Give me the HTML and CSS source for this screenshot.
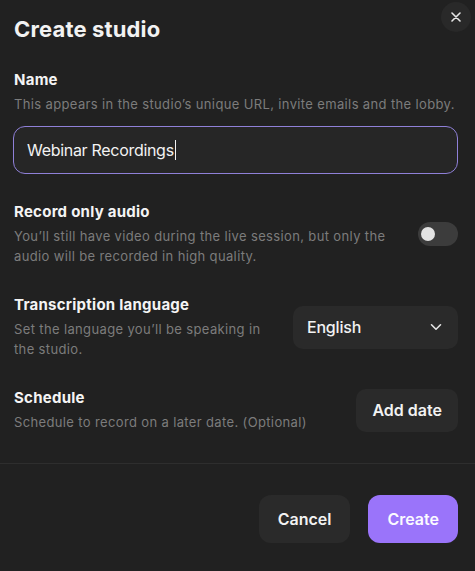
FILE: index.html
```html
<!DOCTYPE html>
<html lang="en">
<head>
<meta charset="utf-8">
<title>Create studio</title>
<link rel="stylesheet" href="styles.css">
</head>
<body>
<div class="dialog">
  <button class="close" aria-label="Close">
    <svg width="10" height="10" viewBox="0 0 10 10"><path d="M1 1L9 9M9 1L1 9" stroke="#e6e6e6" stroke-width="1.6" stroke-linecap="round"/></svg>
  </button>
  <div class="body">
    <h1 class="title">Create studio</h1>
    <div class="field">
      <div class="label">Name</div>
      <div class="desc">This appears in the studio’s unique URL, invite emails and the lobby.</div>
      <div class="input"><span>Webinar Recordings</span><span class="caret"></span></div>
    </div>
    <div class="rows">
      <div class="row">
        <div class="text">
          <div class="label">Record only audio</div>
          <div class="desc">You’ll still have video during the live session, but only the audio will be recorded in high quality.</div>
        </div>
        <div class="toggle"><span class="knob"></span></div>
      </div>
      <div class="row">
        <div class="text">
          <div class="label">Transcription language</div>
          <div class="desc">Set the language you’ll be speaking in the studio.</div>
        </div>
        <div class="select">
          <span>English</span>
          <svg width="12" height="8" viewBox="0 0 12 8"><path d="M1.5 1.8L6 6.2L10.5 1.8" fill="none" stroke="#e6e6e6" stroke-width="1.6" stroke-linecap="round" stroke-linejoin="round"/></svg>
        </div>
      </div>
      <div class="row">
        <div class="text">
          <div class="label">Schedule</div>
          <div class="desc">Schedule to record on a later date. (Optional)</div>
        </div>
        <button class="btn">Add date</button>
      </div>
    </div>
  </div>
  <div class="footer">
    <button class="btn btn-lg">Cancel</button>
    <button class="btn btn-lg primary">Create</button>
  </div>
</div>
</body>
</html>
```
FILE: styles.css
```css
* { box-sizing: border-box; }
html, body { margin: 0; padding: 0; }
body {
  background: #212121;
  font-family: Inter, "Noto Sans", sans-serif;
  color: #f2f2f2;
  width: 475px;
  height: 571px;
  overflow: hidden;
}
.dialog { position: relative; }
.close {
  position: absolute;
  top: 2px;
  right: 4px;
  width: 30px;
  height: 30px;
  border-radius: 50%;
  border: none;
  background: #292929;
  display: flex;
  align-items: center;
  justify-content: center;
  padding: 0;
}
.body { padding: 15px 17px 31px 13px; }
.title {
  margin: 0 0 0 1px;
  font-size: 22px;
  line-height: 28px;
  font-weight: 700;
  letter-spacing: 0.15px;
}
.field { margin-top: 27px; }
.label {
  font-size: 15px;
  line-height: 20px;
  font-weight: 700;
  letter-spacing: 0.25px;
  color: #f4f4f4;
  margin-left: 1px;
}
.desc {
  font-size: 13px;
  line-height: 20px;
  letter-spacing: 0.36px;
  color: #7c7c7c;
  margin-top: 4px;
  margin-left: 1px;
}
.input {
  margin-top: 12px;
  height: 48px;
  border: 1px solid #8f80d8;
  border-radius: 12px;
  background: #262626;
  display: flex;
  align-items: center;
  padding: 0 13px;
  font-size: 16px;
  letter-spacing: -0.3px;
  color: #f2f2f2;
}
.caret {
  display: inline-block;
  width: 1.5px;
  height: 20px;
  background: #f2f2f2;
  margin-left: 1px;
}
.rows {
  margin-top: 28px;
  display: flex;
  flex-direction: column;
  gap: 29px;
}
.row {
  display: flex;
  align-items: center;
  justify-content: space-between;
  gap: 30px;
}
.text { flex: 1; }
.toggle {
  width: 40px;
  height: 24px;
  border-radius: 12px;
  background: #3c3c3c;
  padding: 5px 3px;
  display: flex;
  align-items: center;
  flex: none;
}
.knob {
  width: 14px;
  height: 14px;
  border-radius: 50%;
  background: #e2e2e2;
}
.select {
  flex: none;
  width: 165px;
  height: 43px;
  border-radius: 10px;
  background: #2a2a2a;
  display: flex;
  align-items: center;
  justify-content: space-between;
  padding: 0 16px 0 14px;
  font-size: 16px;
  font-weight: 500;
  letter-spacing: -0.2px;
  color: #f2f2f2;
}
.btn {
  flex: none;
  border: none;
  font-family: inherit;
  font-size: 16px;
  font-weight: 600;
  color: #f2f2f2;
  background: #2a2a2a;
  border-radius: 10px;
  height: 43px;
  padding: 0 16px;
}
.footer {
  border-top: 1px solid #2e2e2e;
  padding: 31px 17px 28px 13px;
  display: flex;
  justify-content: flex-end;
  gap: 18px;
}
.btn-lg {
  height: 48px;
  border-radius: 12px;
  padding: 0 19px;
}
.primary {
  background: #9a74fa;
  color: #fbfaff;
}
```
